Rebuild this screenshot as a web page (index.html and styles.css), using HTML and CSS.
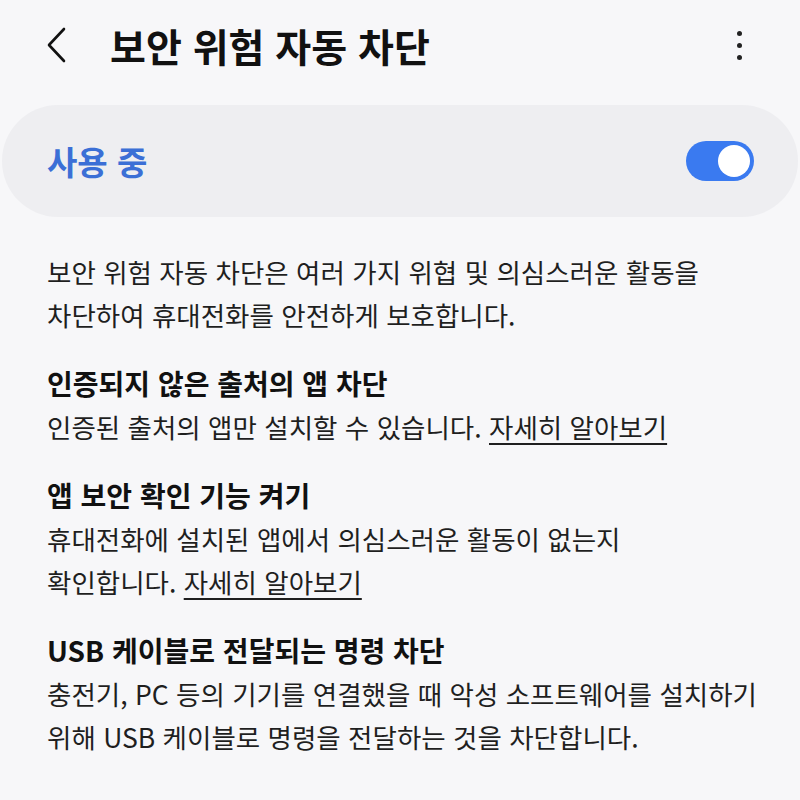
FILE: index.html
```html
<!DOCTYPE html>
<html lang="ko">
<head>
  <meta charset="UTF-8" />
  <meta name="viewport" content="width=device-width, initial-scale=1.0" />
  <title>보안 위험 자동 차단</title>
  <link rel="stylesheet" href="styles.css">
</head>
<body>

  <!-- Top bar -->
  <header class="topbar">
    <button class="back" aria-label="뒤로">
      <svg width="24" height="38" viewBox="0 0 24 38">
        <path d="M20 3 L5 19 L20 35" fill="none" stroke="#111" stroke-width="2.6" stroke-linecap="round" stroke-linejoin="round"/>
      </svg>
    </button>
    <h1 class="title">보안 위험 자동 차단</h1>
    <button class="more" aria-label="더보기">
      <span></span><span></span><span></span>
    </button>
  </header>

  <!-- Master switch -->
  <div class="switch-card">
    <span class="switch-label">사용 중</span>
    <div class="toggle on"><div class="knob"></div></div>
  </div>

  <div class="content">
    <p class="intro">보안 위험 자동 차단은 여러 가지 위협 및 의심스러운 활동을<br>차단하여 휴대전화를 안전하게 보호합니다.</p>

    <div class="item">
      <h3>인증되지 않은 출처의 앱 차단</h3>
      <p>인증된 출처의 앱만 설치할 수 있습니다. <a href="#">자세히 알아보기</a></p>
    </div>

    <div class="item">
      <h3>앱 보안 확인 기능 켜기</h3>
      <p>휴대전화에 설치된 앱에서 의심스러운 활동이 없는지<br>확인합니다. <a href="#">자세히 알아보기</a></p>
    </div>

    <div class="item">
      <h3>USB 케이블로 전달되는 명령 차단</h3>
      <p>충전기, PC 등의 기기를 연결했을 때 악성 소프트웨어를 설치하기<br>위해 USB 케이블로 명령을 전달하는 것을 차단합니다.</p>
    </div>
  </div>

</body>
</html>
```

FILE: styles.css
```css
body {
  font-family: "Noto Sans CJK KR", "Noto Sans", sans-serif;
  margin: 0;
  padding: 0;
  background-color: #f7f7f9;
  color: #222;
}

.topbar {
  display: flex;
  align-items: center;
  height: 90px;
  padding: 0 40px 0 44px;
}

.back,
.more {
  background: none;
  border: none;
  padding: 0;
  cursor: pointer;
}

.back {
  display: flex;
  width: 66px;
}

.title {
  flex: 1;
  margin: 0;
  font-size: 39px;
  font-weight: 700;
  color: #111;
}

.more {
  display: flex;
  flex-direction: column;
  gap: 7px;
  padding: 4px 18px 4px 14px;
}

.more span {
  width: 5px;
  height: 5px;
  border-radius: 50%;
  background-color: #222;
}

.switch-card {
  display: flex;
  align-items: center;
  justify-content: space-between;
  margin: 15px 2px 0;
  height: 112px;
  padding: 0 44px 0 45px;
  background-color: #eeeef1;
  border-radius: 56px;
}

.switch-label {
  font-size: 33px;
  font-weight: 700;
  color: #3b6fd6;
}

.toggle {
  width: 68px;
  height: 40px;
  border-radius: 20px;
  background-color: #3a7af0;
  display: flex;
  align-items: center;
  justify-content: flex-end;
  padding: 0 4px;
  box-sizing: border-box;
}

.knob {
  width: 32px;
  height: 32px;
  border-radius: 50%;
  background-color: #fff;
}

.content {
  padding: 0 0 0 47px;
}

.content p {
  margin: 0;
  font-size: 26.5px;
  line-height: 43px;
  color: #1f1f1f;
  white-space: nowrap;
}

.intro {
  margin-top: 33px !important;
}

.item {
  margin-top: 26px;
}

.item h3 {
  margin: 0;
  font-size: 28px;
  font-weight: 700;
  line-height: 43px;
  color: #111;
}

.item a {
  color: #1f1f1f;
  text-decoration: underline;
  text-underline-offset: 5px;
  text-decoration-thickness: 2px;
}
```
